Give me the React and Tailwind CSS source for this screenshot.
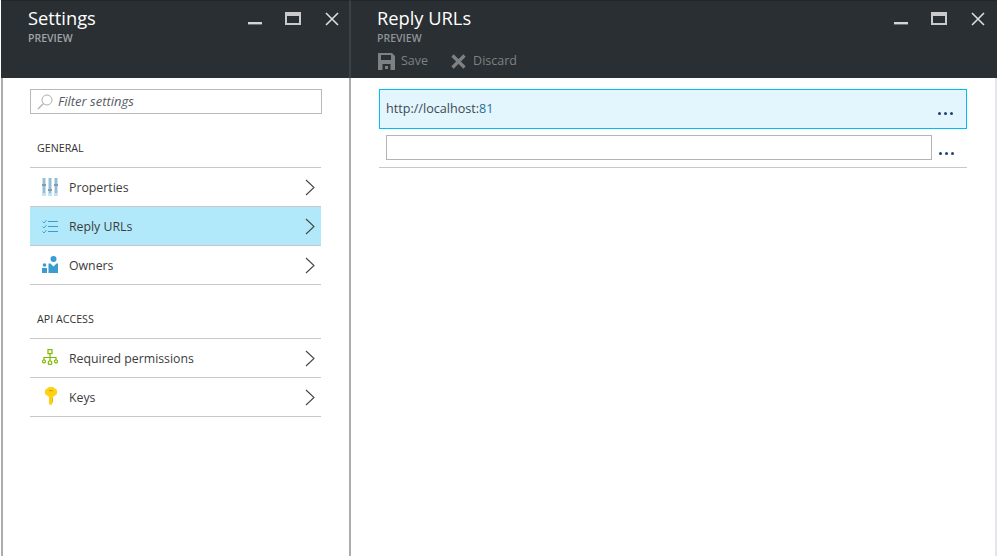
const font = { fontFamily: '"Open Sans", "Noto Sans", sans-serif' };

function Min() {
  return <svg width="14" height="3" className="block"><rect width="14" height="2.4" fill="#d4d5d6" /></svg>;
}
function Max() {
  return <svg width="16" height="14" className="block"><path d="M0 0H16V13H0Z M2 4V11H14V4Z" fillRule="evenodd" fill="#c8cacb" /></svg>;
}
function Close() {
  return <svg width="14" height="14" className="block"><path d="M1 1L13 13M13 1L1 13" stroke="#dcdddd" strokeWidth="1.6" fill="none" /></svg>;
}
function Controls() {
  return (
    <div className="flex items-start">
      <div className="mt-[21px] w-[14px]"><Min /></div>
      <div className="mt-[11px] ml-[23px]"><Max /></div>
      <div className="mt-[11px] ml-[24px]"><Close /></div>
    </div>
  );
}
function Chevron() {
  return (
    <svg width="10" height="17" className="block"><path d="M1 1L9 8.5L1 16" stroke="#444" strokeWidth="1.1" fill="none" /></svg>
  );
}
function Props() {
  return (
    <svg width="16" height="18" viewBox="0 0 16 18" className="block">
      <rect x="0" y="0" width="4" height="18" fill="#c4e2f1" /><rect x="6" y="0" width="4" height="18" fill="#c4e2f1" /><rect x="12" y="0" width="4" height="18" fill="#c4e2f1" />
      <rect x="1.5" y="0" width="1" height="15" fill="#6f97ad" /><rect x="7.5" y="0" width="1" height="15" fill="#6f97ad" /><rect x="13.5" y="0" width="1" height="15" fill="#6f97ad" />
      <rect x="0" y="6" width="4" height="2" fill="#8c99a1" /><rect x="6" y="11" width="4" height="2" fill="#8c99a1" /><rect x="12" y="6" width="4" height="2" fill="#8c99a1" />
    </svg>
  );
}
function Checks() {
  return (
    <svg width="16" height="15" viewBox="0 0 16 15" className="block" fill="none" stroke="#3a9ccf">
      <path d="M0.5 2.5L2 4L4.5 1M0.5 7.5L2 9L4.5 6M0.5 12.5L2 14L4.5 11" strokeWidth="0.9" />
      <path d="M6 2.5H16M6 7.5H16M6 12.5H16" strokeWidth="1.2" />
    </svg>
  );
}
function Owners() {
  return (
    <svg width="16" height="17" viewBox="0 0 16 17" className="block -mt-[2px]" fill="#3a9ccf">
      <circle cx="11.5" cy="3" r="3" />
      <path d="M6.5 7.5H8.5L11.5 10.5L14.5 7.5H16V17H6.5Z" />
      <circle cx="2.5" cy="9" r="1.8" />
      <rect x="0" y="12" width="5" height="5" />
    </svg>
  );
}
function Tree() {
  return (
    <svg width="16" height="16" viewBox="0 0 16 16" className="block -mt-[2px]" fill="none" stroke="#7fba00" strokeWidth="1.2">
      <rect x="6" y="0.6" width="4" height="4" />
      <path d="M8 4.6V12M2 11V8.5H14V11" />
      <rect x="0.6" y="11" width="2.8" height="2.8" rx="1" />
      <rect x="6.3" y="12" width="3.4" height="3.4" rx="1" />
      <rect x="12.6" y="11" width="2.8" height="2.8" rx="1" />
    </svg>
  );
}
function Key() {
  return (
    <svg width="12" height="18" viewBox="0 0 12 18" className="block -mt-[2px]" fill="#fcd116">
      <path d="M4 0H8L12 3V7L8 10V15L6.5 18H5L4 16.5V10L0 7V3Z" />
      <rect x="4" y="3" width="4" height="1.2" fill="#d9a400" />
      <rect x="7" y="11" width="1" height="4" fill="#e8b500" />
    </svg>
  );
}

const rowBase = "flex items-center h-[39px] border-b border-[#c8c8c8] pr-[6px]";
function Row({ icon, label, active }) {
  return (
    <div className={`${rowBase} ${active ? "bg-[#b2e9fa]" : ""}`}>
      <div className="w-[39px] pl-[12px] flex justify-start shrink-0">{icon}</div>
      <span className="flex-1 text-[12.3px] text-[#3c3c3c] relative top-[1px]">{label}</span>
      <Chevron />
    </div>
  );
}
function Section({ title, children }) {
  return (
    <div className="mt-[27px]">
      <div className="h-[26px] pl-[7px] text-[10.7px] leading-[14px] font-medium text-[#333]">{title}</div>
      <div className="border-t border-[#c8c8c8]">{children}</div>
    </div>
  );
}
function Dots() {
  return (
    <div className="flex gap-[3px]">
      <i className="block w-[3px] h-[3px] rounded-full bg-[#1d3f75]" />
      <i className="block w-[3px] h-[3px] rounded-full bg-[#1d3f75]" />
      <i className="block w-[3px] h-[3px] rounded-full bg-[#1d3f75]" />
    </div>
  );
}

export default function App() {
  return (
    <div style={font} className="flex w-[997px] h-[556px] bg-white overflow-hidden">
      <div className="w-[351px] shrink-0 flex flex-col pl-[1px]">
        <header className="h-[78px] bg-[#2a2f33] border-t border-[#222629] border-r-2 border-r-[#3b4145] pl-[27px] pr-[10px] flex justify-between shrink-0">
          <div>
            <div className="text-[18.3px] leading-[24px] mt-[5px] text-white">Settings</div>
            <div className="text-[10.5px] leading-[14px] mt-[1px] font-semibold text-[#a0a4a7]">PREVIEW</div>
          </div>
          <Controls />
        </header>
        <div className="flex-1 border-l-2 border-r-2 border-[#acacac] pl-[27px] pr-[28px]">
          <div className="mt-[11px] h-[25px] border-[1.5px] border-[#b9b9b9] mr-[-1px] flex items-center pl-[6px]">
            <svg width="16" height="16" viewBox="0 0 16 16" fill="none" stroke="#b0b0b0" className="block shrink-0">
              <circle cx="10" cy="6" r="5" strokeWidth="1" /><path d="M6.5 9.5L1 15" strokeWidth="1.2" />
            </svg>
            <span className="italic text-[13px] ml-[5px] text-[#555c66]">Filter settings</span>
          </div>
          <Section title="GENERAL">
            <Row icon={<Props />} label="Properties" />
            <Row icon={<Checks />} label="Reply URLs" active />
            <Row icon={<Owners />} label="Owners" />
          </Section>
          <Section title="API ACCESS">
            <Row icon={<Tree />} label="Required permissions" />
            <Row icon={<div className="pl-[3px]"><Key /></div>} label="Keys" />
          </Section>
        </div>
      </div>
      <div className="flex-1 flex flex-col">
        <header className="h-[78px] bg-[#2a2f33] border-t border-[#222629] pl-[26px] pr-[12px] flex justify-between shrink-0">
          <div>
            <div className="text-[18.3px] leading-[24px] mt-[5px] text-white">Reply URLs</div>
            <div className="text-[10.5px] leading-[14px] mt-[1px] font-semibold text-[#8f9396]">PREVIEW</div>
            <div className="flex items-center mt-[7px] ml-[1px] text-[12.5px] font-medium text-[#7d8184]">
              <svg width="17" height="17" viewBox="0 0 17 17" className="block" fill="#7d8184">
                <path fillRule="evenodd" d="M0 0H14L17 3V17H0Z M3 2V7H13V2Z M4.5 11V17H12.5V11Z" />
                <rect x="7" y="13" width="3" height="3" />
              </svg>
              <span className="ml-[6px]">Save</span>
              <svg width="15" height="15" viewBox="0 0 15 15" className="block ml-[23px]" fill="none" stroke="#7d8184" strokeWidth="3.2">
                <path d="M1.5 1.5L13.5 13.5M13.5 1.5L1.5 13.5" />
              </svg>
              <span className="ml-[7px]">Discard</span>
            </div>
          </div>
          <Controls />
        </header>
        <div className="flex-1 flex">
          <div className="flex-1 pl-[28px] pr-[28px]">
            <div className="mt-[11px] h-[40px] border border-[#00bcf2] bg-[#e3f6fd] flex pl-[6px] pr-[13px]">
              <span className="text-[12.6px] leading-[38px] text-[#3c4a52]">http://localhost:<span className="text-[#2a6f97]">81</span></span>
              <div className="ml-auto mt-[22px]"><Dots /></div>
            </div>
            <div className="mt-[6px] h-[33px] border-b border-[#c8c8c8] flex pl-[7px] pr-[13px]">
              <div className="flex-1 h-[25px] border border-[#b4b4b4]" />
              <div className="ml-[7px] mt-[17px]"><Dots /></div>
            </div>
          </div>
          <div className="w-[2px] bg-[#e4e4ec]" />
        </div>
      </div>
    </div>
  );
}
